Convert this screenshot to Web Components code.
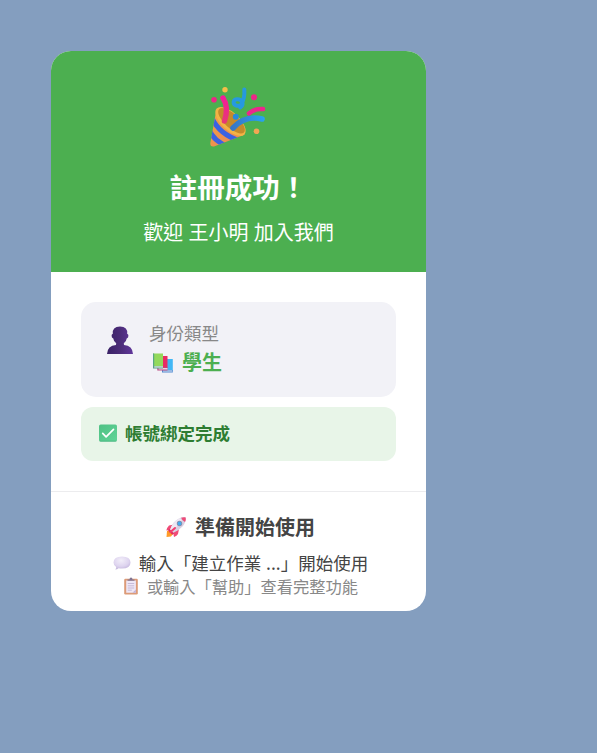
<!DOCTYPE html>
<html lang="zh-Hant">
<head>
<meta charset="utf-8">
<title>註冊成功</title>
<style>
html,body{margin:0;background:#849ebf}
body{min-height:753px;box-sizing:border-box;padding:51px;font-family:"Noto Sans CJK TC",sans-serif;word-spacing:.055em}
</style>
</head>
<body>
<success-card>
  <success-header slot="header">
    <ui-icon slot="icon" name="party" style="--w:60px"></ui-icon>
    <span slot="title">註冊成功！</span>
    <span slot="subtitle">歡迎 王小明 加入我們</span>
  </success-header>
  <identity-box>
    <ui-icon slot="avatar" name="person" style="--w:28px"></ui-icon>
    <span slot="label">身份類型</span>
    <icon-line slot="value" style="--gap:8px;--inset:3px"><ui-icon slot="icon" name="books" style="--w:22px"></ui-icon>學生</icon-line>
  </identity-box>
  <status-box><icon-line style="--gap:8px"><ui-icon slot="icon" name="check" style="--w:18px"></ui-icon>帳號綁定完成</icon-line></status-box>
  <start-footer slot="footer">
    <icon-line slot="heading" style="--gap:8px;--inset:3px"><ui-icon slot="icon" name="rocket" style="--w:22px"></ui-icon>準備開始使用</icon-line>
    <icon-line slot="primary" style="--gap:8px;--inset:4px"><ui-icon slot="icon" name="bubble" style="--w:18px"></ui-icon>輸入「建立作業 ...」開始使用</icon-line>
    <icon-line slot="secondary" style="--gap:8px;--inset:4px"><ui-icon slot="icon" name="clipboard" style="--w:16px"></ui-icon>或輸入「幫助」查看完整功能</icon-line>
  </start-footer>
</success-card>
<script>
const icons = {
party:`<svg viewBox="0 0 60 60"><defs><linearGradient id="cone" x1="0" y1="0" x2="1" y2="1"><stop stop-color="#f3a63f"/><stop offset="1" stop-color="#e8805c"/></linearGradient><linearGradient id="blue" gradientUnits="userSpaceOnUse" x1="24" y1="0" x2="56" y2="0"><stop stop-color="#3777c6"/><stop offset="1" stop-color="#26a5f2"/></linearGradient><linearGradient id="pink" gradientUnits="userSpaceOnUse" x1="0" x2="0" y1="9" y2="36"><stop stop-color="#f51b9b"/><stop offset="1" stop-color="#e63a73"/></linearGradient><clipPath id="body"><path d="M7.5 22Q13 39 36 47.5L5 59.5Q1 60 1.3 56Z"/></clipPath></defs>
<path d="M7.5 22Q13 39 36 47.5L5 59.5Q1 60 1.3 56Z" fill="url(#cone)"/><g clip-path="url(#body)" fill="none" stroke="#3b62e2" stroke-width="5"><path d="M3 31Q10 47 31 54"/><path d="M0 42Q4 54 20 60"/></g>
<ellipse cx="21.5" cy="34.5" rx="19" ry="8.8" transform="rotate(43 21.5 34.5)" fill="#f3b345"/><ellipse cx="22.5" cy="33.8" rx="17" ry="7" transform="rotate(43 22.5 33.8)" fill="#c58a2b"/>
<path d="M14 11Q20 20 15.5 34" fill="none" stroke="url(#pink)" stroke-width="5.4" stroke-linecap="round"/><path d="M24 41Q36 28 53 32" fill="none" stroke="url(#blue)" stroke-width="5.6" stroke-linecap="round"/>
<path d="M35.3 2.5Q36 11 32 18C28.5 20 24.2 18 24.7 14.7C25.5 11 31.4 12 32.8 14.5C34.2 17 33.8 19 31.2 20.5" fill="none" stroke="#2699df" stroke-width="4" stroke-linecap="round"/>
<path d="M40 26.3Q45 21.5 54 22" fill="none" stroke="#ed268c" stroke-width="4.6" stroke-linecap="round"/><g fill="#ed2787"><circle cx="5" cy="12.7" r="2.8"/><circle cx="45" cy="10.3" r="3"/></g><circle cx="16" cy="2.7" r="2.7" fill="#f5bd48"/><circle cx="47.5" cy="44.2" r="2.8" fill="#f2a653"/><circle cx="26.8" cy="29.7" r="3" fill="#278adb"/></svg>`,
person:`<svg viewBox="0 0 28 28"><defs><linearGradient id="p" x1="0" x2="1"><stop stop-color="#3a2266"/><stop offset=".5" stop-color="#4b2c78"/><stop offset="1" stop-color="#61379b"/></linearGradient></defs><path d="M1 28Q1.5 19.5 10 19L10.2 17.3Q7.6 15.6 7.3 12.5Q5.5 12 5.6 9.7Q5.6 7.8 6.8 8Q6 .5 14 .5Q22 .5 21.2 8Q22.4 7.8 22.4 9.7Q22.5 12 20.7 12.5Q20.4 15.6 17.8 17.3L18 19Q26.5 19.5 27 28Z" fill="url(#p)"/></svg>`,
books:`<svg viewBox="0 0 22 22"><path d="M11 8h9.8v12.3H11z" fill="#42b7f5"/><path d="M10 19h10.8v2.5H10z" fill="#5289cf"/><path d="M11 19.4h9.3v1.2H11z" fill="#c8daf0"/><path d="M6.5 5H15.5v12H6.5z" fill="#e92a64"/><path d="M5.3 16.5h10.2v3H5.3z" fill="#bc4b80"/><path d="M6.5 17h9v1.5h-9z" fill="#ecd3e3"/><path d="M1 2.5h10v13H1z" fill="#93d95b"/><path d="M1 2.5h1.2V17H1z" fill="#58a784"/><path d="M1 15h10v2.5H1z" fill="#5d9c88"/><path d="M2.2 15.3H11v1.3H2.2z" fill="#d3e8e1"/></svg>`,
check:`<svg viewBox="0 0 18 18"><defs><linearGradient id="c" x1="0" y1="0" x2="1" y2="1"><stop stop-color="#4fc184"/><stop offset="1" stop-color="#60d497"/></linearGradient></defs><rect y=".5" width="18" height="17" rx="1.7" fill="url(#c)"/><path d="M0 16.7h18q-.3.8-1.5.8h-15Q.3 17.5 0 16.7" fill="#45ae7d"/><path d="m3.7 9.4 3.4 3.5 7.4-7.5" fill="none" stroke="#fff" stroke-width="1.7" stroke-linecap="round" stroke-linejoin="round"/></svg>`,
rocket:`<svg viewBox="0 0 22 22"><path d="M2 15 5 14 8 18 6 20.5 1.5 21Z" fill="#ff9b28"/><path d="m9 8.5-5 1q-2 2-2.7 5l5-1zM14 13l-1 5q-1 2-4 3l-1-5z" fill="#f04a76"/><path d="M5 14Q8 5 14 2.5Q18 .5 20.7 1.4Q21.4 5 18 10Q14 14.5 8 17Z" fill="#d8cfe2"/><path d="M5 14Q8 5 15 2L17 5 7 16Z" fill="#eee8f3"/><path d="M16.2 1.7Q19 .8 20.7 1.4Q21.2 4 20 6Q17.2 5 16.2 1.7" fill="#ef4b78"/><circle cx="14.5" cy="7.5" r="2.7" fill="#8c8ca8"/><circle cx="14.5" cy="7.5" r="1.9" fill="#45acec"/><path d="m4.2 12.8 5 4.8-2 1.2-4-4z" fill="#dd315f"/><path d="m10 12-4.5 4" stroke="#f33d6e" stroke-width="2" stroke-linecap="round"/></svg>`,
bubble:`<svg viewBox="0 0 18 18"><defs><radialGradient id="b" cx=".45" cy=".3" r=".65"><stop stop-color="#f2eef9"/><stop offset=".7" stop-color="#ded4ef"/><stop offset="1" stop-color="#c9bce0"/></radialGradient></defs><path d="M9 2.5Q17.5 2.5 17.5 8.5T9 14.5Q7 14.5 5.5 14.2Q4.2 15.7 2.2 15.6Q3.2 14.7 3.2 13.1Q.5 11.3.5 8.5Q.5 2.5 9 2.5" fill="url(#b)"/></svg>`,
clipboard:`<svg viewBox="0 0 16 18"><rect x="1.2" y="1.7" width="13.6" height="15.8" rx="1.2" fill="#dc9b78"/><path d="M3.2 3.5h9.7v12.3H3.2z" fill="#eee7f6"/><path d="M9.5 15.8h3.4v-3.2z" fill="#c3b2d5"/><path d="M4.5 3.8V2.5h2Q6.5.6 8 .6t1.5 1.9h2v1.3z" fill="#827592"/><path d="M4.8 6.5h6.4M4.8 8.8h6.4M4.8 11h6.4M4.8 13.2h4" stroke="#bdaed0" stroke-width=".8"/></svg>`
};
function element(name,css,html){customElements.define(name,class extends HTMLElement{constructor(){super();this.attachShadow({mode:"open"}).innerHTML=`<style>${css}</style>${html}`}})}
customElements.define("ui-icon",class extends HTMLElement{connectedCallback(){if(!this.shadowRoot)this.attachShadow({mode:"open"}).innerHTML=`<style>:host{display:block;width:var(--w);flex:none}svg{display:block;width:100%;height:auto}</style>${icons[this.getAttribute("name")]}`}});
element("icon-line",`:host{display:flex;align-items:center;gap:var(--gap);padding-left:var(--inset,0)}span{white-space:nowrap}`,`<slot name="icon"></slot><span><slot></slot></span>`);
element("success-card",`:host{display:block;width:375px;height:560px;background:#fff;border-radius:20px;overflow:hidden}main{display:flex;flex-direction:column;gap:10px;padding:30px;height:159px}`,`<slot name="header"></slot><main><slot></slot></main><slot name="footer"></slot>`);
element("success-header",`:host{display:flex;flex-direction:column;align-items:center;box-sizing:border-box;height:221px;padding-top:36px;background:#4caf50;color:#fff}.title{font-size:27.5px;line-height:40px;font-weight:700;margin-top:19px}.subtitle{font-size:20px;line-height:30px;margin-top:11px}`,`<slot name="icon"></slot><div class="title"><slot name="title"></slot></div><div class="subtitle"><slot name="subtitle"></slot></div>`);
element("identity-box",`:host{display:flex;gap:15px;align-items:flex-start;box-sizing:border-box;height:95px;padding:17px 25px;border-radius:15px;background:#f2f2f7}.avatar{padding-top:7px}.label{font-size:17.5px;line-height:27px;color:#888}.value{font-size:20px;line-height:30px;font-weight:700;color:#4caf50;margin-top:1px}`,`<div class="avatar"><slot name="avatar"></slot></div><div><div class="label"><slot name="label"></slot></div><div class="value"><slot name="value"></slot></div></div>`);
element("status-box",`:host{display:flex;align-items:flex-start;box-sizing:border-box;height:54px;padding:13px 18px 0;border-radius:12px;background:#e8f5e8;color:#2e7d32;font-size:17.5px;line-height:26px;font-weight:700}`,`<slot></slot>`);
element("start-footer",`:host{display:flex;flex-direction:column;align-items:center;box-sizing:border-box;height:120px;padding-top:20px;border-top:1px solid #ececee}.heading{font-size:20px;line-height:30px;font-weight:700;color:#444}.primary{font-size:17.5px;line-height:26px;margin-top:8px;color:#444}.secondary{font-size:16.25px;line-height:22px;margin-top:-1px;color:#888}`,`<div class="heading"><slot name="heading"></slot></div><div class="primary"><slot name="primary"></slot></div><div class="secondary"><slot name="secondary"></slot></div>`);
</script>
</body>
</html>
